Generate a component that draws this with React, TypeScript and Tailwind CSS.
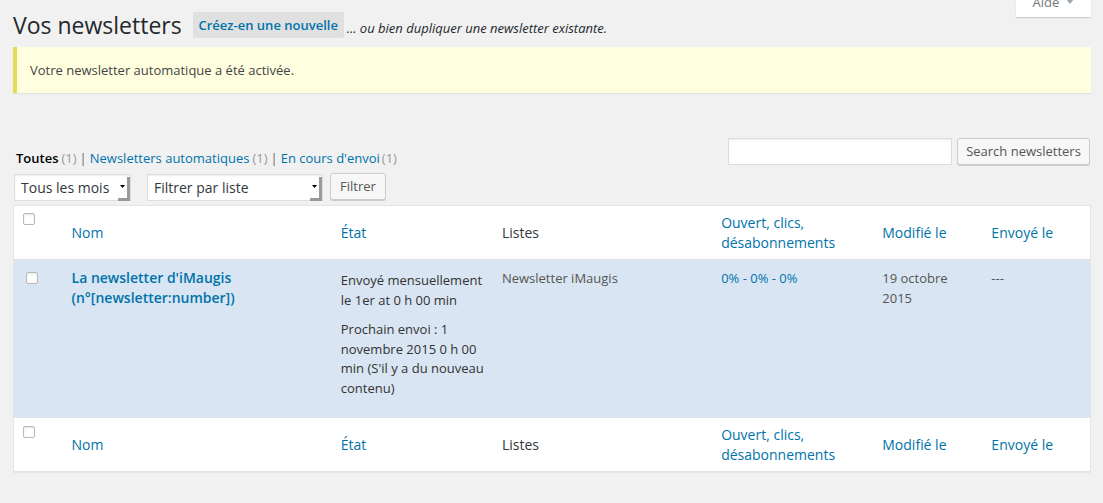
import React from "react";

const Checkbox = ({ className = "" }: { className?: string }) => (
  <span
    className={
      "block w-[12px] h-[12px] rounded-[2px] border border-[#b4b9be] bg-white shadow-[inset_0_1px_2px_rgba(0,0,0,0.1)] " +
      className
    }
  />
);

const FakeSelect = ({ label, width }: { label: string; width: string }) => (
  <div
    className={
      "flex h-[27px] items-stretch justify-between border border-[#dddddd] bg-white shadow-[inset_0_1px_2px_rgba(0,0,0,0.07)] " +
      width
    }
  >
    <span className="pl-[6px] text-[14px] leading-[25px] text-[#32373c]">{label}</span>
    <span className="mt-[2px] flex h-[24px] w-[12px] justify-center border-r-[3px] border-b-[3px] border-[#9a9a9a] bg-white pt-[8px]">
      <svg width="5" height="3" viewBox="0 0 5 3" className="block">
        <polygon points="0,0 5,0 2.5,3" fill="#000" />
      </svg>
    </span>
  </div>
);

const HeaderRow = ({ top }: { top: string }) => (
  <tr className="h-[54px]">
    <th className={"align-top pl-[9px] " + top}>
      <Checkbox />
    </th>
    <th className="px-[10px] text-left align-middle text-[14px] font-normal leading-[20px] text-[#0073aa]">Nom</th>
    <th className="px-[10px] text-left align-middle text-[14px] font-normal leading-[20px] text-[#0073aa]">État</th>
    <th className="px-[10px] text-left align-middle text-[14px] font-normal leading-[20px] text-[#32373c]">Listes</th>
    <th className="px-[10px] text-left align-middle text-[14px] font-normal leading-[20px] text-[#0073aa]">
      Ouvert, clics, désabonnements
    </th>
    <th className="px-[10px] text-left align-middle text-[14px] font-normal leading-[20px] text-[#0073aa]">Modifié le</th>
    <th className="px-[10px] text-left align-middle text-[14px] font-normal leading-[20px] text-[#0073aa]">Envoyé le</th>
  </tr>
);

export default function App() {
  return (
    <div
      className="relative min-h-[503px] w-full bg-[#f1f1f1] pl-[13px] pr-[12px] text-[#444444]"
      style={{ fontFamily: '"Open Sans", "Noto Sans", sans-serif' }}
    >
      {/* Aide tab */}
      <div className="absolute right-[12px] top-0 flex h-[17px] w-[75px] items-start justify-center overflow-hidden bg-white shadow-[0_1px_1px_rgba(0,0,0,0.15)]">
        <div className="mt-[-4px] flex items-center gap-[7px]">
          <span className="text-[13px] leading-[13px] text-[#72777c]">Aide</span>
          <svg width="8" height="5" viewBox="0 0 8 5" className="mt-[-3px] block">
            <polygon points="0,0 8,0 4,5" fill="#a0a5aa" />
          </svg>
        </div>
      </div>

      {/* Title row */}
      <div className="flex h-[38px] items-end">
        <h1 className="text-[23px] font-normal leading-[26px] text-[#23282d]">Vos newsletters</h1>
        <span className="ml-[11px] flex h-[26px] w-[151px] items-center justify-center rounded-[2px] bg-[#e0e0e0] pt-[1px] text-[13px] font-semibold text-[#0073aa]">
          Créez-en une nouvelle
        </span>
        <span className="mb-[1px] ml-[3px] text-[13px] italic leading-[18px] text-[#23282d]">
          ... ou bien dupliquer une newsletter existante.
        </span>
      </div>

      {/* Notice */}
      <div className="mt-[9px] flex h-[46px] items-center border-l-[4px] border-[#e6db55] bg-[#ffffe0] pl-[13px] shadow-[0_1px_1px_rgba(0,0,0,0.06)]">
        <span className="text-[13px] leading-[20px] text-[#444444]">Votre newsletter automatique a été activée.</span>
      </div>

      {/* Subsubsub + search */}
      <div className="mt-[45px] flex h-[30px] items-start justify-between">
        <div className="pl-[3px] pt-[10px] text-[13px] leading-[20px]">
          <span className="font-semibold text-black">Toutes</span>
          <span className="ml-[3px] text-[#999999]">(1)</span>
          <span className="mx-[3px] text-[#666666]">|</span>
          <span className="text-[#0073aa]">Newsletters automatiques</span>
          <span className="ml-[3px] text-[#999999]">(1)</span>
          <span className="mx-[3px] text-[#666666]">|</span>
          <span className="text-[#0073aa]">En cours d'envoi</span>
          <span className="ml-[2px] text-[#999999]">(1)</span>
        </div>
        <div className="mr-[1px] flex gap-[5px]">
          <div className="h-[27px] w-[224px] border border-[#dddddd] bg-white shadow-[inset_0_1px_2px_rgba(0,0,0,0.07)]" />
          <div className="flex h-[27px] w-[133px] items-center justify-center rounded-[3px] border border-[#cccccc] bg-[#f7f7f7] pt-[1px] text-[13px] text-[#555555] shadow-[0_1px_0_#cccccc]">
            Search newsletters
          </div>
        </div>
      </div>

      {/* Filters */}
      <div className="mt-[5px] flex items-start">
        <div className="ml-[1px] mt-[1px]">
          <FakeSelect label="Tous les mois" width="w-[117px]" />
        </div>
        <div className="ml-[16px] mt-[1px]">
          <FakeSelect label="Filtrer par liste" width="w-[176px]" />
        </div>
        <div className="ml-[7px] flex h-[27px] w-[56px] items-center justify-center rounded-[3px] border border-[#cccccc] bg-[#f7f7f7] text-[13px] text-[#555555] shadow-[0_1px_0_#cccccc]">
          Filtrer
        </div>
      </div>

      {/* Table */}
      <table className="mt-[4px] w-[1078px] table-fixed border border-[#e5e5e5] bg-white shadow-[0_1px_1px_rgba(0,0,0,0.04)]">
        <colgroup>
          <col className="w-[48px]" />
          <col className="w-[269px]" />
          <col className="w-[161px]" />
          <col className="w-[219px]" />
          <col className="w-[161px]" />
          <col className="w-[109px]" />
          <col className="w-[109px]" />
        </colgroup>
        <thead className="border-b border-[#e1e1e1]">
          <HeaderRow top="pt-[7px]" />
        </thead>
        <tbody>
          <tr className="h-[158px] bg-[#d9e5f2]">
            <td className="align-top pl-[12px] pt-[12px]">
              <Checkbox />
            </td>
            <td className="px-[10px] pt-[8px] align-top text-[14px] font-semibold leading-[20px] text-[#0073aa]">
              La newsletter d'iMaugis <span className="whitespace-nowrap">(n°[newsletter:number])</span>
            </td>
            <td className="pl-[10px] pr-[2px] pt-[11px] align-top text-[13px] leading-[19.5px] text-[#333333]">
              <p>Envoyé mensuellement le 1er at 0 h 00 min</p>
              <p className="mt-[10px]">Prochain envoi : 1 novembre 2015 0 h 00 min (S'il y a du nouveau contenu)</p>
            </td>
            <td className="px-[10px] pt-[9px] align-top text-[13px] leading-[19.5px] text-[#555555]">Newsletter iMaugis</td>
            <td className="px-[10px] pt-[9px] align-top text-[13px] leading-[19.5px] text-[#0073aa]">0% - 0% - 0%</td>
            <td className="px-[10px] pt-[9px] align-top text-[13px] leading-[19.5px] text-[#555555]">19 octobre 2015</td>
            <td className="px-[10px] pt-[9px] align-top text-[13px] leading-[19.5px] text-[#555555]">---</td>
          </tr>
        </tbody>
        <tfoot className="border-t border-[#e1e1e1]">
          <HeaderRow top="pt-[8px]" />
        </tfoot>
      </table>
    </div>
  );
}
